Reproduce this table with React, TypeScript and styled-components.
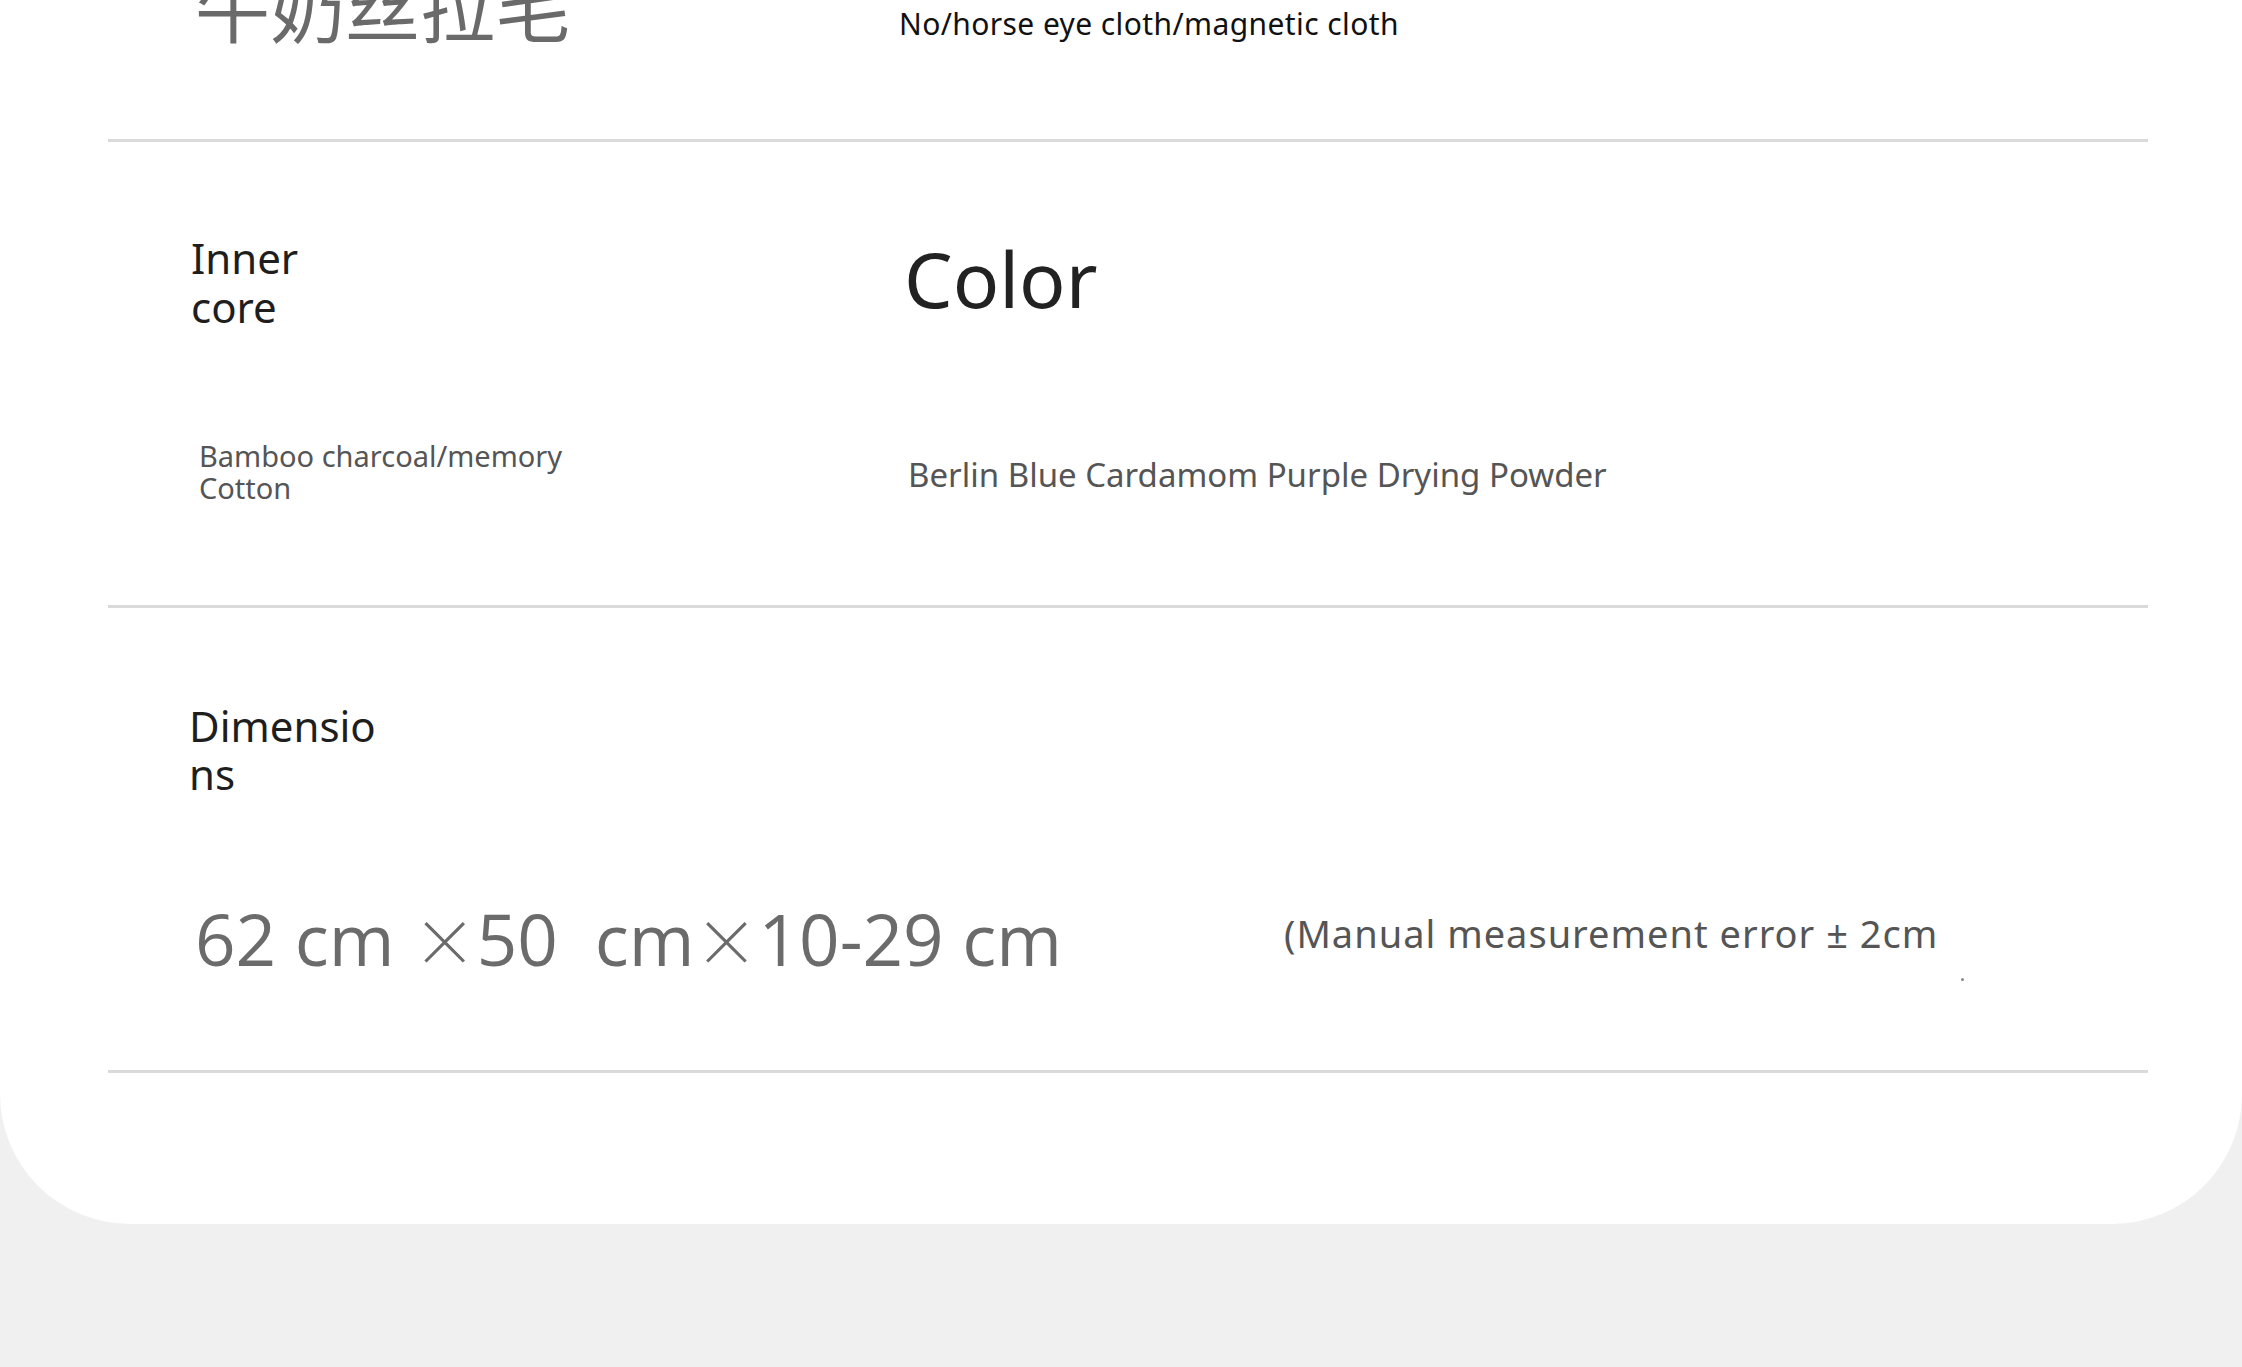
import styled, { createGlobalStyle } from 'styled-components';

const GlobalStyle = createGlobalStyle`
  html, body {
    margin: 0;
    padding: 0;
    background: #f0f0f0;
  }
  body {
    font-family: 'Noto Sans', 'Noto Sans CJK SC', sans-serif;
    overflow: hidden;
  }
`;

const Page = styled.div`
  width: 2242px;
  height: 1367px;
  background: #f0f0f0;
  overflow: hidden;
`;

const Card = styled.div`
  background: #fff;
  border-radius: 0 0 130px 130px;
  padding: 0 94px 151px 108px;
`;

const Row = styled.section<{ $pt: number; $pb: number }>`
  display: grid;
  grid-template-columns: 713px 1fr;
  align-items: start;
  padding: ${(p) => p.$pt}px 0 ${(p) => p.$pb}px 80px;
  border-bottom: 3px solid #dadada;
`;

const Cell = styled.div`
  display: flex;
  flex-direction: column;
  align-items: flex-start;
`;

const Wide = styled.div<{ $mt: number }>`
  grid-column: 1 / -1;
  display: flex;
  align-items: flex-start;
  margin-top: ${(p) => p.$mt}px;
`;

const Chinese = styled.div`
  font-family: 'Noto Sans CJK SC', sans-serif;
  font-size: 75px;
  line-height: 72px;
  color: #6a6a6a;
  margin: -31px 0 0 7px;
`;

const Label = styled.div<{ $mt?: number; $ml?: number; $size: number; $lh: number }>`
  font-size: ${(p) => p.$size}px;
  line-height: ${(p) => p.$lh}px;
  color: #1e1e1e;
  margin: ${(p) => p.$mt ?? 0}px 0 0 ${(p) => p.$ml ?? 0}px;
`;

const HeadLabel = styled.div<{ $mt?: number; $ml?: number }>`
  font-size: 77px;
  line-height: 90px;
  color: #222;
  margin: ${(p) => p.$mt ?? 0}px 0 0 ${(p) => p.$ml ?? 0}px;
`;

const Value = styled.div<{
  $size: number;
  $lh: number;
  $mt?: number;
  $ml?: number;
  $ls?: number;
  $dark?: boolean;
}>`
  font-size: ${(p) => p.$size}px;
  line-height: ${(p) => p.$lh}px;
  letter-spacing: ${(p) => p.$ls ?? 0}px;
  color: ${(p) => (p.$dark ? '#111' : '#555')};
  margin: ${(p) => p.$mt ?? 0}px 0 0 ${(p) => p.$ml ?? 0}px;
`;

const Measure = styled.div`
  width: 1089px;
  flex: none;
  margin-left: 7px;
  font-family: 'Open Sans', 'Noto Sans', sans-serif;
  font-size: 71px;
  line-height: 88px;
  color: #6b6b6b;
  white-space: pre;
`;

const Times = styled.span`
  font-family: 'Noto Sans CJK SC', sans-serif;
  font-size: 0.9em;
  font-weight: 300;
`;

const Note = styled.div`
  width: 677px;
  flex: none;
  font-size: 38px;
  line-height: 41px;
  letter-spacing: 1px;
  color: #555;
  margin-top: 19px;
  white-space: pre;
`;

const Speck = styled.span`
  width: 3px;
  height: 3px;
  border-radius: 50%;
  background: #888;
  margin-top: 84px;
`;

export default function App() {
  return (
    <Page>
      <GlobalStyle />
      <Card>
        <Row $pt={0} $pb={98}>
          <Cell>
            <Chinese>牛奶丝拉毛</Chinese>
          </Cell>
          <Cell>
            <Value $size={30} $lh={32} $mt={8} $ml={-2} $ls={0.4} $dark>
              No/horse eye cloth/magnetic cloth
            </Value>
          </Cell>
        </Row>

        <Row $pt={91} $pb={101}>
          <Cell>
            <Label $size={42} $lh={49} $ml={3}>
              Inner
              <br />
              core
            </Label>
            <Value $size={29} $lh={32} $mt={109} $ml={11}>
              Bamboo charcoal/memory
              <br />
              Cotton
            </Value>
          </Cell>
          <Cell>
            <HeadLabel $mt={1} $ml={3}>Color</HeadLabel>
            <Value $size={33} $lh={36} $mt={133} $ml={7}>
              Berlin Blue Cardamom Purple Drying Powder
            </Value>
          </Cell>
        </Row>

        <Row $pt={94} $pb={87}>
          <Cell>
            <Label $size={42} $lh={48} $ml={1}>
              Dimensio
              <br />
              ns
            </Label>
          </Cell>
          <Wide $mt={96}>
            <Measure>
              62 cm <Times>×</Times>50  cm<Times>×</Times>10-29 cm
            </Measure>
            <Note>(Manual measurement error ± 2cm</Note>
            <Speck />
          </Wide>
        </Row>
      </Card>
    </Page>
  );
}
